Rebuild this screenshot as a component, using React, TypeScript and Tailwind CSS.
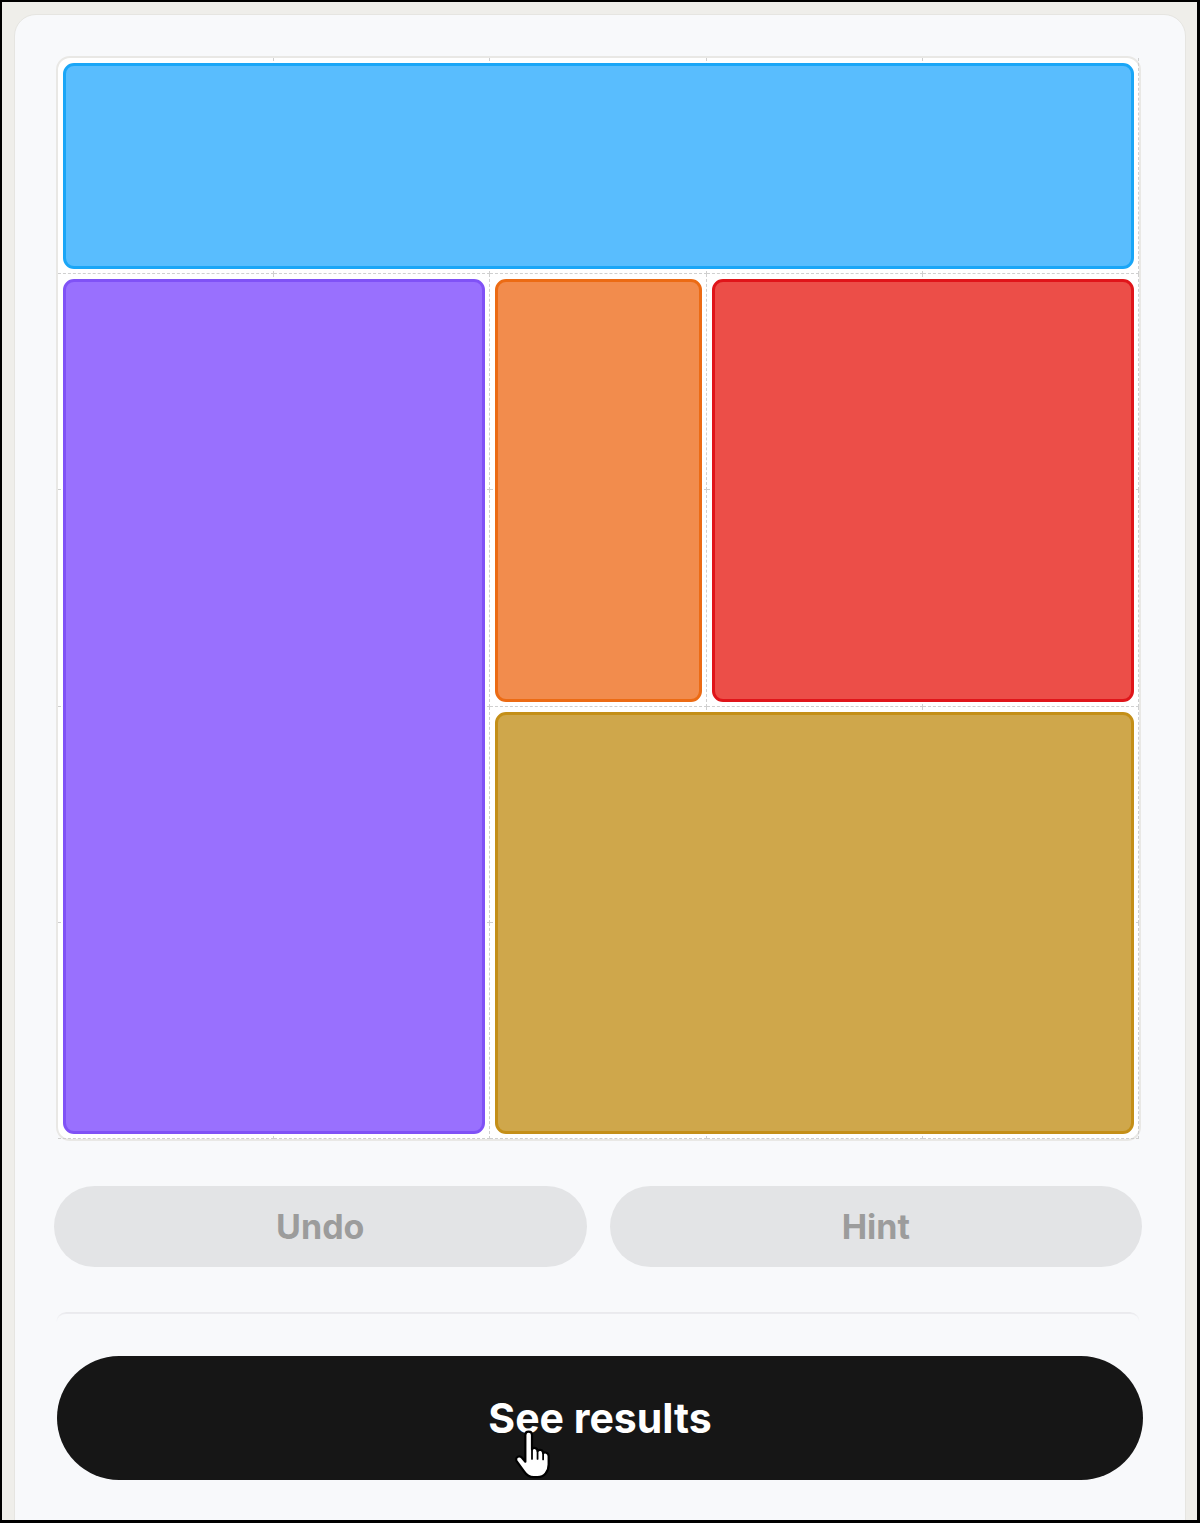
import React from "react";

type Piece = { col: string; row: string; fill: string; border: string };

const pieces: Piece[] = [
  { col: "col-start-1 col-end-6", row: "row-start-1 row-end-2", fill: "bg-[#59bdfe]", border: "border-[#1aa6f7]" },
  { col: "col-start-1 col-end-3", row: "row-start-2 row-end-6", fill: "bg-[#9970fe]", border: "border-[#8052f6]" },
  { col: "col-start-3 col-end-4", row: "row-start-2 row-end-4", fill: "bg-[#f28c4d]", border: "border-[#ec6b14]" },
  { col: "col-start-4 col-end-6", row: "row-start-2 row-end-4", fill: "bg-[#ec4e48]", border: "border-[#e0151a]" },
  { col: "col-start-3 col-end-6", row: "row-start-4 row-end-6", fill: "bg-[#cfa74b]", border: "border-[#c48f18]" },
];

function HandCursor() {
  return (
    <svg width="40" height="50" viewBox="0 0 36 45" className="absolute left-[24px] top-[42px]">
      <path
        d="M12 4.5C12 2.8 13.3 1.5 15 1.5C16.7 1.5 18 2.8 18 4.5L18 17.5C18.6 16.4 19.9 16 21 16.3C22.4 16.7 23 17.8 23 19C23.7 18 25 17.6 26.1 18C27.3 18.4 28 19.5 28 20.8C28.7 20.1 30 19.9 31 20.4C32.3 21 33 22.3 33 23.7L33 31C33 37.5 29 42.5 23 42.5L19.5 42.5C15.5 42.5 13 40.5 11 37.5L4.3 28.3C3.3 26.8 3.6 25 5 24.2C6.3 23.4 8 23.8 9 25L12 28.5Z"
        fill="white"
        stroke="black"
        strokeWidth="2"
        strokeLinejoin="round"
      />
      <path d="M18 17.5L18 26M23 19L23 26M28 20.8L28 26.5" stroke="black" strokeWidth="1.6" strokeLinecap="round" fill="none" />
    </svg>
  );
}

export default function App() {
  const cells = Array.from({ length: 25 }, (_, i) => i);
  return (
    <div className="w-[1200px] h-[1523px] bg-black pt-[2px] pl-[2px] pr-[3px] pb-[3px] overflow-hidden" style={{ fontFamily: "Inter, 'Noto Sans', sans-serif" }}>
      <div className="w-full h-full bg-[#efeeea] pt-[12px] pl-[12px] pr-[10px] overflow-hidden">
        <div className="w-[1172px] h-[1560px] bg-[#f8f9fb] rounded-[22px] border border-[#e6e5e1] pt-[41px] pl-[39px]">
          {/* Board */}
          <div className="ml-[2px] w-[1085px] h-[1085px] rounded-[14px] border-2 border-[#e9e8e5] bg-white relative">
            <div className="w-full h-full grid grid-cols-5 grid-rows-5">
              {cells.map((c) => (
                <div key={c} className="border-r border-b border-dashed border-[#cfcfcf]" />
              ))}
            </div>
            <div className="absolute inset-0 grid grid-cols-5 grid-rows-5">
              {pieces.map((p, i) => (
                <div
                  key={i}
                  className={`${p.col} ${p.row} m-[5px] rounded-[11px] border-[3px] ${p.fill} ${p.border}`}
                />
              ))}
            </div>
          </div>

          {/* Undo / Hint */}
          <div className="mt-[45px] w-[1088px] flex gap-[23px]">
            <div className="flex-1 h-[81px] rounded-full bg-[#e3e4e6] flex items-center justify-center text-[#9c9c9c] text-[34px] font-bold">
              Undo
            </div>
            <div className="flex-1 h-[81px] rounded-full bg-[#e3e4e6] flex items-center justify-center text-[#9c9c9c] text-[34px] font-bold">
              Hint
            </div>
          </div>

          {/* divider card edge */}
          <div className="mt-[45px] ml-[2px] w-[1084px] h-[10px] rounded-t-[12px] border-t-2 border-l border-r border-[#e9e9ec] [mask-image:linear-gradient(to_bottom,black,transparent)]" />

          {/* See results */}
          <div className="mt-[34px] ml-[3px] w-[1086px] h-[124px] rounded-full bg-[#161616] flex items-center justify-center">
            <div className="relative text-white text-[41px] leading-[60px] font-bold">
              See results
              <HandCursor />
            </div>
          </div>
        </div>
      </div>
    </div>
  );
}
